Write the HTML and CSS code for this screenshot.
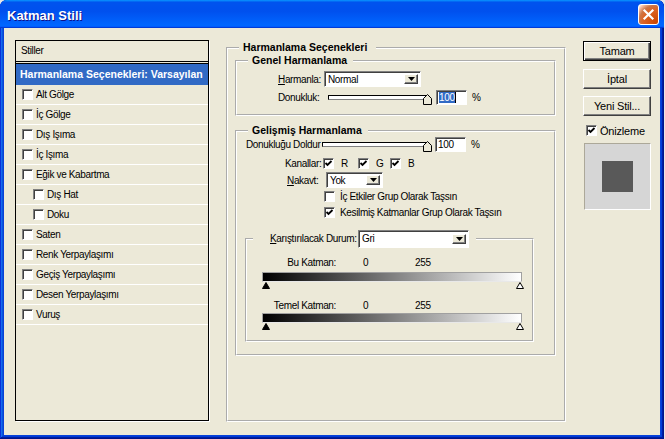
FILE: index.html
```html
<!DOCTYPE html>
<html lang="tr">
<head>
<meta charset="utf-8">
<title>Katman Stili</title>
<link rel="stylesheet" href="styles.css">
</head>
<body>
<div class="window">
  <div class="titlebar">
    <span class="title">Katman Stili</span>
    <span class="close"><svg width="13" height="13" viewBox="0 0 13 13"><path d="M2.5 2.5 L10.5 10.5 M10.5 2.5 L2.5 10.5" stroke="#fff" stroke-width="2.2" stroke-linecap="square"/></svg></span>
  </div>
  <div class="client">
    <div class="list">
      <div class="list-head">Stiller</div>
      <div class="list-sel">Harmanlama Seçenekleri: Varsayılan</div>
      <div class="item"><span class="cb"></span>Alt Gölge</div>
      <div class="item"><span class="cb"></span>İç Gölge</div>
      <div class="item"><span class="cb"></span>Dış Işıma</div>
      <div class="item"><span class="cb"></span>İç Işıma</div>
      <div class="item"><span class="cb"></span>Eğik ve Kabartma</div>
      <div class="item sub"><span class="cb"></span>Dış Hat</div>
      <div class="item sub"><span class="cb"></span>Doku</div>
      <div class="item"><span class="cb"></span>Saten</div>
      <div class="item"><span class="cb"></span>Renk Yerpaylaşımı</div>
      <div class="item"><span class="cb"></span>Geçiş Yerpaylaşımı</div>
      <div class="item"><span class="cb"></span>Desen Yerpaylaşımı</div>
      <div class="item"><span class="cb"></span>Vuruş</div>
    </div>

    <fieldset class="grp grp-main">
      <legend class="lg-main">Harmanlama Seçenekleri</legend>

      <fieldset class="grp grp-sub grp-genel">
        <legend class="lg-sub">Genel Harmanlama</legend>
        <div class="row r-harm">
          <span class="lbl w-harm"><u>H</u>armanla:</span>
          <div class="combo combo-normal"><span class="combo-text">Normal</span><span class="combo-btn"><svg width="7" height="4" viewBox="0 0 7 4"><path d="M0 0 H7 L3.5 4 Z" fill="#000"/></svg></span></div>
        </div>
        <div class="row r-don">
          <span class="lbl w-don">Donukluk:</span>
          <div class="slider s-genel"><div class="track"></div><svg class="thumb" width="10" height="11" viewBox="0 0 10 11"><path d="M0.5 10.5 V4.5 L4.5 0.5 L8.5 4.5 V10.5 Z" fill="#ece9d8" stroke="#000"/></svg></div>
          <div class="num"><span class="hl">100</span><span class="caret"></span></div>
          <span class="pct">%</span>
        </div>
      </fieldset>

      <fieldset class="grp grp-sub grp-adv">
        <legend class="lg-sub">Gelişmiş Harmanlama</legend>
        <div class="row r-fill">
          <span class="lbl w-fill">Donukluğu Doldur</span>
          <div class="slider s-adv"><div class="track"></div><svg class="thumb" width="10" height="11" viewBox="0 0 10 11"><path d="M0.5 10.5 V4.5 L4.5 0.5 L8.5 4.5 V10.5 Z" fill="#ece9d8" stroke="#000"/></svg></div>
          <div class="num num-adv"><span>100</span></div>
          <span class="pct">%</span>
        </div>
        <div class="row r-ch">
          <span class="lbl w-ch">Kanallar:</span>
          <span class="ch ch-r"><span class="cb"><svg width="9" height="9" viewBox="0 0 9 9"><path d="M1.5 4 L3.5 6 L7.5 2" fill="none" stroke="#000" stroke-width="1.8"/></svg></span>R</span>
          <span class="ch ch-g"><span class="cb"><svg width="9" height="9" viewBox="0 0 9 9"><path d="M1.5 4 L3.5 6 L7.5 2" fill="none" stroke="#000" stroke-width="1.8"/></svg></span>G</span>
          <span class="ch"><span class="cb"><svg width="9" height="9" viewBox="0 0 9 9"><path d="M1.5 4 L3.5 6 L7.5 2" fill="none" stroke="#000" stroke-width="1.8"/></svg></span>B</span>
        </div>
        <div class="row r-nak">
          <span class="lbl w-nak"><u>N</u>akavt:</span>
          <div class="combo combo-yok"><span class="combo-text">Yok</span><span class="combo-btn"><svg width="7" height="4" viewBox="0 0 7 4"><path d="M0 0 H7 L3.5 4 Z" fill="#000"/></svg></span></div>
        </div>
        <div class="row r-opt r-opt1">
          <span class="cb"></span><span>İç Etkiler Grup Olarak Taşsın</span>
        </div>
        <div class="row r-opt">
          <span class="cb"><svg width="9" height="9" viewBox="0 0 9 9"><path d="M1.5 4 L3.5 6 L7.5 2" fill="none" stroke="#000" stroke-width="1.8"/></svg></span><span>Kesilmiş Katmanlar Grup Olarak Taşsın</span>
        </div>

        <fieldset class="grp grp-blend">
          <legend class="lg-blend">
            <span class="lbl w-blend"><u>K</u>arıştırılacak Durum:</span>
            <span class="combo combo-gri"><span class="combo-text">Gri</span><span class="combo-btn"><svg width="7" height="4" viewBox="0 0 7 4"><path d="M0 0 H7 L3.5 4 Z" fill="#000"/></svg></span></span>
          </legend>
          <div class="row r-val r-val1">
            <span class="vlbl">Bu Katman:</span><span class="v0">0</span><span>255</span>
          </div>
          <div class="gbar"></div>
          <div class="tris">
            <svg width="8" height="7" viewBox="0 0 8 7"><path d="M0.5 6.5 L4 0.5 L7.5 6.5 Z" fill="#000" stroke="#000"/></svg>
            <svg width="8" height="7" viewBox="0 0 8 7"><path d="M0.5 6.5 L4 0.5 L7.5 6.5 Z" fill="#fff" stroke="#000"/></svg>
          </div>
          <div class="row r-val r-val2">
            <span class="vlbl">Temel Katman:</span><span class="v0">0</span><span>255</span>
          </div>
          <div class="gbar"></div>
          <div class="tris">
            <svg width="8" height="7" viewBox="0 0 8 7"><path d="M0.5 6.5 L4 0.5 L7.5 6.5 Z" fill="#000" stroke="#000"/></svg>
            <svg width="8" height="7" viewBox="0 0 8 7"><path d="M0.5 6.5 L4 0.5 L7.5 6.5 Z" fill="#fff" stroke="#000"/></svg>
          </div>
        </fieldset>
      </fieldset>
    </fieldset>

    <div class="side">
      <div class="btn btn-default">Tamam</div>
      <div class="btn btn-cancel">İptal</div>
      <div class="btn btn-new">Yeni Stil...</div>
      <div class="prev-row"><span class="cb"><svg width="9" height="9" viewBox="0 0 9 9"><path d="M1.5 4 L3.5 6 L7.5 2" fill="none" stroke="#000" stroke-width="1.8"/></svg></span><span>Önizleme</span></div>
      <div class="preview"><div class="preview-sq"></div></div>
    </div>
  </div>
</div>
</body>
</html>
```

FILE: styles.css
```css
* { box-sizing: border-box; }
html, body { margin: 0; padding: 0; }
body {
  width: 665px;
  height: 439px;
  overflow: hidden;
  background: #e6e6e6;
  font-family: "Liberation Sans", Arial, sans-serif;
  font-size: 10px;
  letter-spacing: -0.35px;
  color: #000;
}
.window {
  width: 664px;
  height: 439px;
  display: flex;
  flex-direction: column;
  background: #0842d8;
  border-radius: 7px 7px 0 0;
  padding: 0 4px 4px;
  box-shadow: inset -1px -1px #00138c, inset 1px 1px #0831d9, inset -2px -2px #001ea0, inset 2px 2px #166aee, inset -3px -3px #003bda, inset 3px 3px #0855dd;
}
.titlebar {
  height: 28px;
  margin: 0 -4px;
  flex: none;
  border-radius: 7px 7px 0 0;
  background: linear-gradient(180deg, #0997ff, #0053ee 8%, #0050ee 40%, #06f 88%, #06f 93%, #005bff 95%, #003dd7 96%, #003dd7);
  display: flex;
  align-items: center;
  justify-content: space-between;
  padding: 0 5px 0 7px;
}
.title {
  color: #fff;
  font-weight: bold;
  font-size: 13px;
  letter-spacing: 0;
  text-shadow: 1px 1px #0f1089;
  margin-top: 2px;
}
.close {
  width: 21px;
  height: 21px;
  border: 1px solid #fff;
  border-radius: 3px;
  background: radial-gradient(circle at 90% 90%, #cc4600 0, #dc6527 55%, #cd7546 70%, #ffccb2 90%, #fff 100%);
  display: flex;
  align-items: center;
  justify-content: center;
  margin-top: 1px;
}
.client {
  flex: 1;
  background: #ece9d8;
  display: flex;
  align-items: flex-start;
  padding: 12px 0 0 11px;
}

/* left list */
.list {
  width: 194px;
  height: 381px;
  border: 1px solid #000;
  box-shadow: 1px 1px 0 #fff;
  flex: none;
}
.list-head {
  height: 23px;
  line-height: 20px;
  padding-left: 5px;
  border-bottom: 3px double #000;
}
.list-sel {
  height: 21px;
  line-height: 21px;
  background: #316ac5;
  color: #fff;
  font-weight: bold;
  font-size: 10.5px;
  letter-spacing: 0;
  padding-left: 4px;
  white-space: nowrap;
  overflow: hidden;
}
.item {
  height: 20px;
  border-bottom: 1px solid #fff;
  display: flex;
  align-items: center;
  gap: 3px;
  padding-left: 6px;
}
.item.sub { padding-left: 17px; }

/* checkbox */
.cb {
  width: 11px;
  height: 11px;
  flex: none;
  background: #fff;
  border: 1px solid;
  border-color: #808080 #fff #fff #808080;
  box-shadow: inset 1px 1px #404040;
  display: inline-flex;
}
.cb svg { display: block; margin: 0; }

/* group boxes */
.grp {
  margin: 0;
  padding: 0;
  border: 2px groove #fff;
  min-width: 0;
}
.grp legend {
  line-height: 13px;
  font-weight: bold;
  font-size: 10.5px;
  letter-spacing: 0;
}
.grp-main {
  width: 340px;
  margin: 1px 0 0 17px;
  padding: 0 0 64px 0;
  flex: none;
}
.lg-main { margin-left: 11px; padding: 0 9px 0 4px; }
.grp-sub { margin-left: 7px; width: 321px; }
.lg-sub { margin-left: 11px; padding: 0 6px 0 4px; }
.grp-genel { padding: 4px 0 9px 0; }
.grp-adv { margin-top: 8px; padding: 0 0 12px 0; }

.row { display: flex; align-items: center; }
.lbl { flex: none; white-space: nowrap; }

.r-harm { height: 16px; padding-left: 41px; }
.w-harm { width: 46px; }
.r-don { height: 15px; margin-top: 3px; padding-left: 41px; }
.w-don { width: 50px; }

/* combo */
.combo {
  display: inline-flex;
  height: 16px;
  background: #fff;
  border: 1px solid;
  border-color: #808080 #fff #fff #808080;
  box-shadow: inset 1px 1px #404040;
  padding: 2px 2px 2px 3px;
  align-items: stretch;
}
.combo-text { flex: 1; display: flex; align-items: center; }
.combo-btn {
  width: 14px;
  flex: none;
  background: #ece9d8;
  border: 1px solid;
  border-color: #fff #404040 #404040 #fff;
  box-shadow: inset -1px -1px #808080;
  display: flex;
  align-items: center;
  justify-content: center;
}
.combo-normal { width: 97px; }
.combo-yok { width: 57px; }
.combo-gri { width: 111px; height: 18px; padding: 3px 2px 3px 3px; font-weight: normal; }

/* slider */
.slider { position: relative; height: 15px; flex: none; }
.s-genel { width: 100px; }
.s-adv { width: 106px; }
.track {
  margin-top: 5px;
  height: 5px;
  margin-right: 2px;
  background: #fff;
  border: 1px solid #000;
  border-bottom-color: #808080;
}
.thumb { position: absolute; right: -5px; top: 4px; }

.num {
  width: 31px;
  height: 15px;
  margin-left: 8px;
  background: #fff;
  border: 1px solid;
  border-color: #808080 #fff #fff #808080;
  box-shadow: inset 1px 1px #404040;
  display: flex;
  align-items: center;
  padding-left: 2px;
  flex: none;
}
.num-adv { margin-left: 7px; }
.hl { background: #316ac5; color: #fff; line-height: 11px; }
.caret { width: 1px; height: 11px; background: #000; }
.pct { margin-left: 5px; }

.r-fill { height: 15px; padding-left: 9px; }
.w-fill { width: 76px; }
.r-ch { height: 15px; margin-top: 4px; padding-left: 48px; }
.w-ch { width: 38px; }
.ch { display: inline-flex; align-items: center; gap: 7px; flex: none; }
.ch-r { width: 35px; }
.ch-g { width: 32px; }
.r-nak { height: 16px; margin-top: 1px; padding-left: 50px; }
.w-nak { width: 39px; }
.r-opt { height: 16px; padding-left: 87px; gap: 5px; }
.r-opt1 { margin-top: 1px; height: 15px; }

/* blend-if group */
.grp-blend { margin: 10px 0 0 8px; width: 289px; padding: 0 0 9px 0; }
.lg-blend {
  display: flex;
  align-items: center;
  margin-left: 6px;
  padding: 0 7px 0 17px;
  font-weight: normal !important;
  font-size: 10px !important;
  letter-spacing: -0.35px !important;
  line-height: 18px !important;
}
.w-blend { width: 88px; }
.r-val { height: 12px; }
.r-val1 { margin-top: 8px; }
.r-val2 { margin-top: 9px; }
.vlbl { width: 89px; text-align: right; flex: none; }
.v0 { margin-left: 27px; width: 52px; flex: none; }
.gbar {
  width: 260px;
  height: 10px;
  margin: 4px 0 0 15px;
  border: 1px solid #a0a0a0;
  border-bottom-color: #e8e8e8;
  background: linear-gradient(to right, #000, #fff);
}
.r-val2 + .gbar { margin-top: 2px; }
.tris {
  width: 262px;
  margin-left: 15px;
  height: 8px;
  display: flex;
  justify-content: space-between;
  align-items: flex-start;
}
.tris svg { display: block; }

/* right side */
.side {
  width: 68px;
  margin-left: 17px;
  display: flex;
  flex-direction: column;
  flex: none;
}
.btn {
  height: 20px;
  font-size: 11px;
  letter-spacing: -0.2px;
  display: flex;
  align-items: center;
  justify-content: center;
  background: #ece9d8;
  border: 1px solid;
  border-color: #fff #404040 #404040 #fff;
  box-shadow: inset -1px -1px #808080;
}
.btn-default {
  margin-top: 1px;
  border-color: #000;
  box-shadow: inset 1px 1px #fff, inset -1px -1px #404040, inset -2px -2px #808080;
}
.btn-cancel { margin-top: 8px; }
.btn-new { margin-top: 7px; }
.prev-row {
  margin: 9px 0 0 3px;
  height: 11px;
  display: flex;
  align-items: center;
  gap: 3px;
  font-size: 11px;
  letter-spacing: -0.2px;
}
.preview {
  width: 67px;
  height: 67px;
  margin: 7px 0 0 1px;
  background: #d6d6d6;
  border: 1px solid;
  border-color: #aca899 #fff #fff #aca899;
  display: flex;
  align-items: center;
  justify-content: center;
}
.preview-sq { width: 31px; height: 31px; background: #595959; }
```
